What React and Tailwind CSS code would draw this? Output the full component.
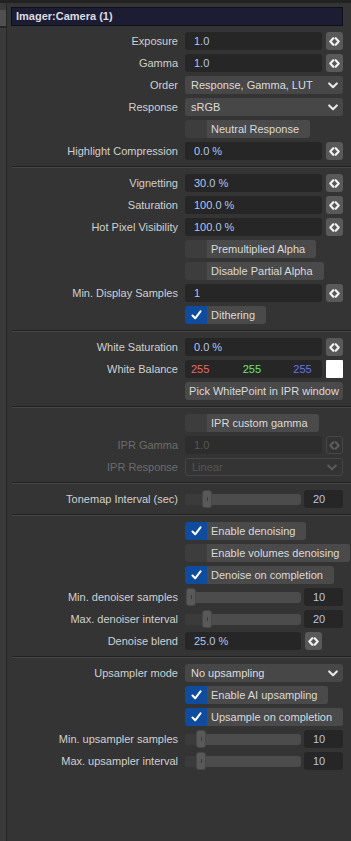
import React from "react";

const font = { fontFamily: '"Liberation Sans", Arial, sans-serif' };

const Stepper = ({ dim }) => (
  <div
    className={`w-[17px] h-[18px] rounded-[3px] flex items-center justify-center ${
      dim ? "border border-[#474747] bg-[#333333]" : "bg-[#595959]"
    }`}
  >
    <svg width="11" height="9" viewBox="0 0 11 9">
      <path
        d="M4.3 1.2 L1.3 4.5 L4.3 7.8 M6.7 1.2 L9.7 4.5 L6.7 7.8"
        fill="none"
        stroke={dim ? "#5c5c5c" : "#f2f2f2"}
        strokeWidth="2.1"
        strokeLinecap="round"
        strokeLinejoin="round"
      />
    </svg>
  </div>
);

const Chevron = ({ dim }) => (
  <svg width="10" height="7" viewBox="0 0 10 7">
    <path
      d="M1.2 1.4 L5 5.2 L8.8 1.4"
      fill="none"
      stroke={dim ? "#5a5a5a" : "#e8e8e8"}
      strokeWidth="2.1"
      strokeLinecap="round"
      strokeLinejoin="round"
    />
  </svg>
);

const Check = () => (
  <svg width="11" height="10" viewBox="0 0 11 10">
    <path
      d="M1.5 5.5 L4.2 8.3 L9.5 1.3"
      fill="none"
      stroke="#ffffff"
      strokeWidth="2"
      strokeLinecap="round"
      strokeLinejoin="round"
    />
  </svg>
);

const Row = ({ label, dim, children }) => (
  <div className="grid grid-cols-[166px_158px] gap-x-[7px] h-[18px] items-center">
    <div
      className={`text-right whitespace-nowrap ${
        dim ? "text-[#6c6c6c]" : "text-[#d0d0d0]"
      }`}
    >
      {label}
    </div>
    <div className="flex items-center h-[18px]">{children}</div>
  </div>
);

const Field = ({ value, dim, short }) => (
  <div className="flex items-center gap-[4px] w-full">
    <div
      className={`h-[18px] rounded-[3px] pl-[9px] flex items-center ${
        short ? "w-[116px]" : "w-[137px]"
      } ${dim ? "bg-[#2d2d2d] text-[#575757]" : "bg-[#262626] text-[#b6c5ea]"}`}
    >
      {value}
    </div>
    <Stepper dim={dim} />
  </div>
);

const Select = ({ value, dim }) => (
  <div
    className={`w-full h-[18px] rounded-[3px] pl-[6px] pr-[5px] flex items-center justify-between ${
      dim
        ? "border border-[#464646] bg-[#343434] text-[#555555]"
        : "bg-[#474747] text-[#dcdcdc]"
    }`}
  >
    <span>{value}</span>
    <Chevron dim={dim} />
  </div>
);

const Toggle = ({ label, checked }) => (
  <div className="flex shrink-0 h-[18px] w-max rounded-[3px] overflow-hidden whitespace-nowrap">
    <div
      className={`w-[22px] shrink-0 flex items-center justify-center ${
        checked ? "bg-[#0f4c9e]" : "bg-[#3d3d3d]"
      }`}
    >
      {checked && <Check />}
    </div>
    <div className="bg-[#4a4a4a] text-[#dadada] pl-[4px] pr-[11px] flex items-center">
      {label}
    </div>
  </div>
);

const Slider = ({ pos, value }) => (
  <div className="flex items-center gap-[3px] w-full">
    <div className="relative w-[116px] h-[18px] flex items-center">
      <div className="w-full h-[11px] rounded-[3px] bg-[#4c4c4c] overflow-hidden">
        <div className="h-full bg-[#3b3b3b]" style={{ width: pos + 2 }} />
      </div>
      <div
        className="absolute top-0 w-[10px] h-[18px] rounded-[3px] bg-[#595959] border border-[#474747] flex items-center justify-center"
        style={{ left: pos }}
      >
        <div className="w-px h-[4px] bg-[#3a3a3a]" />
      </div>
    </div>
    <div className="w-[39px] h-[18px] rounded-[3px] bg-[#262626] text-[#b6c5ea] pl-[9px] flex items-center">
      {value}
    </div>
  </div>
);

const Section = ({ children }) => (
  <div className="flex flex-col gap-[4px] py-[6px] pl-[5px]">{children}</div>
);

const Sep = () => (
  <div className="ml-[5px] h-[2px] border-t border-[#222222] border-b border-b-[#464646]" />
);

export default function App() {
  return (
    <div
      className="w-[351px] h-[841px] flex bg-[#343434] text-[11px] overflow-hidden"
      style={font}
    >
      {/* left strip */}
      <div className="w-[6px] flex flex-col bg-[#3a3a3a]">
        <div className="h-[3px] bg-[#222222]" />
        <div className="h-[7px]" />
        <div className="h-[16px] bg-[#505050]" />
        <div className="h-[2px] bg-[#262626]" />
      </div>
      <div className="w-px bg-[#262626]" />

      <div className="flex-1 flex flex-col">
        <div className="h-[3px] bg-[#222222]" />
        <div className="ml-[4px] mr-[8px] mt-[4px] h-[19px] bg-[#1c1c33] border border-[#0f0f1c] flex items-center pl-[4px] font-bold text-[#dcdce4]">
          Imager:Camera (1)
        </div>

        <Section>
          <Row label="Exposure"><Field value="1.0" /></Row>
          <Row label="Gamma"><Field value="1.0" /></Row>
          <Row label="Order"><Select value="Response, Gamma, LUT" /></Row>
          <Row label="Response"><Select value="sRGB" /></Row>
          <Row label=""><Toggle label="Neutral Response" /></Row>
          <Row label="Highlight Compression"><Field value="0.0 %" /></Row>
        </Section>
        <Sep />
        <Section>
          <Row label="Vignetting"><Field value="30.0 %" /></Row>
          <Row label="Saturation"><Field value="100.0 %" /></Row>
          <Row label="Hot Pixel Visibility"><Field value="100.0 %" /></Row>
          <Row label=""><Toggle label="Premultiplied Alpha" /></Row>
          <Row label=""><Toggle label="Disable Partial Alpha" /></Row>
          <Row label="Min. Display Samples"><Field value="1" /></Row>
          <Row label=""><Toggle label="Dithering" checked /></Row>
        </Section>
        <Sep />
        <Section>
          <Row label="White Saturation"><Field value="0.0 %" /></Row>
          <Row label="White Balance">
            <div className="flex items-center gap-[4px] w-full">
              <div className="w-[137px] h-[18px] rounded-[3px] bg-[#262626] pl-[6px] grid grid-cols-3 items-center">
                <span className="text-[#e86a6a]">255</span>
                <span className="text-[#6ee46e] pl-[8px]">255</span>
                <span className="text-[#6f72e0] pl-[15px]">255</span>
              </div>
              <div className="w-[17px] h-[18px] bg-white rounded-[1px]" />
            </div>
          </Row>
          <Row label="">
            <div className="w-full h-[18px] rounded-[3px] bg-[#4a4a4a] text-[#dadada] flex items-center justify-center whitespace-nowrap">
              Pick WhitePoint in IPR window
            </div>
          </Row>
        </Section>
        <Sep />
        <Section>
          <Row label=""><Toggle label="IPR custom gamma" /></Row>
          <Row label="IPR Gamma" dim><Field value="1.0" dim /></Row>
          <Row label="IPR Response" dim><Select value="Linear" dim /></Row>
        </Section>
        <Sep />
        <Section>
          <Row label="Tonemap Interval (sec)"><Slider pos={17} value="20" /></Row>
        </Section>
        <Sep />
        <Section>
          <Row label=""><Toggle label="Enable denoising" checked /></Row>
          <Row label=""><Toggle label="Enable volumes denoising" /></Row>
          <Row label=""><Toggle label="Denoise on completion" checked /></Row>
          <Row label="Min. denoiser samples"><Slider pos={1} value="10" /></Row>
          <Row label="Max. denoiser interval"><Slider pos={17} value="20" /></Row>
          <Row label="Denoise blend"><Field value="25.0 %" short /></Row>
        </Section>
        <Sep />
        <Section>
          <Row label="Upsampler mode"><Select value="No upsampling" /></Row>
          <Row label=""><Toggle label="Enable AI upsampling" checked /></Row>
          <Row label=""><Toggle label="Upsample on completion" checked /></Row>
          <Row label="Min. upsampler samples"><Slider pos={11} value="10" /></Row>
          <Row label="Max. upsampler interval"><Slider pos={11} value="10" /></Row>
        </Section>
      </div>
    </div>
  );
}
